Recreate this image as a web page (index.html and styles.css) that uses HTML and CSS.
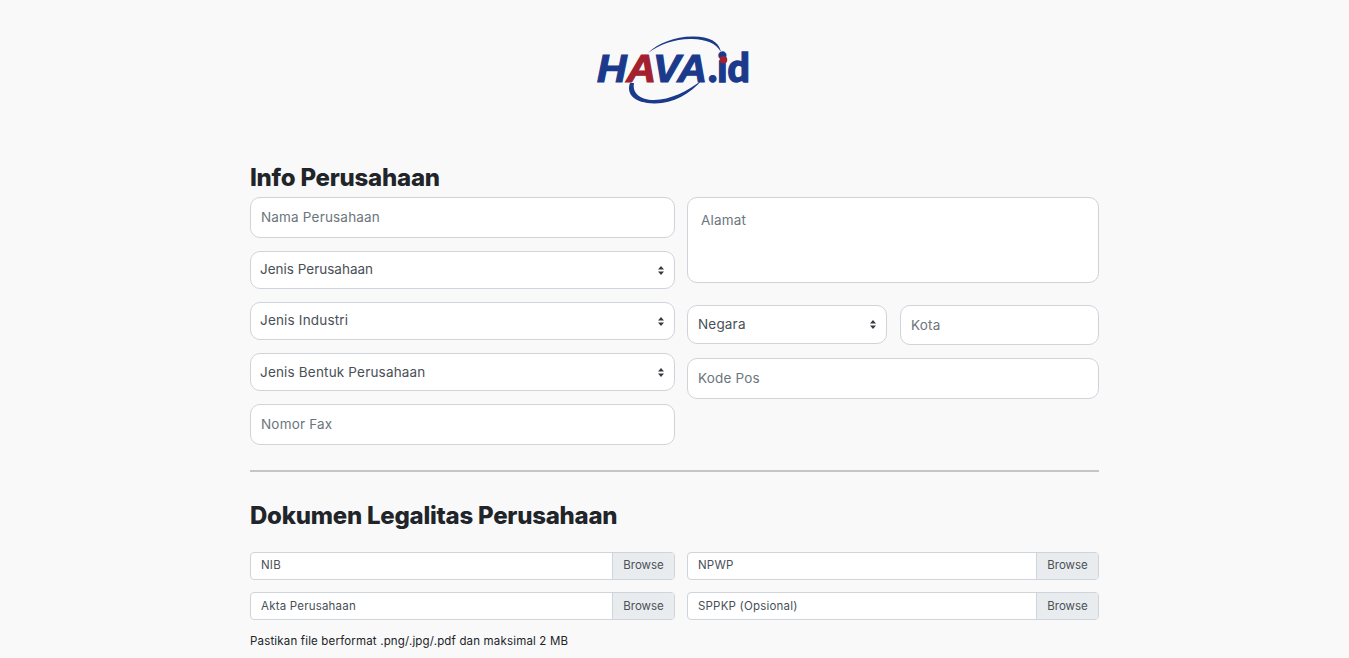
FILE: index.html
```html
<!DOCTYPE html>
<html lang="id">
<head>
<meta charset="utf-8">
<title>Info Perusahaan</title>
<link rel="stylesheet" href="styles.css">
</head>
<body>
<main class="page">
  <header class="logo-wrap">
    <svg class="logo" width="160" height="72" viewBox="0 0 160 72" role="img" aria-label="HAVA.id">
      <path class="arc" d="M52 19C62 9 80 2 98 2.500C113 3 123 7 125 18C120 9 110 5.500 96 5C80 4.500 64 10 52 19Z"/>
      <path class="arc" d="M34 49C30 60 38 69 58 69.500C76 70 94 60 106 46C92 57 74 66 58 66C44 66 36 59 38 49Z"/>
      <text class="word" x="1" y="48" textLength="110" lengthAdjust="spacingAndGlyphs"><tspan class="blue">H</tspan><tspan class="red">A</tspan><tspan class="blue">VA</tspan></text>
      <text class="tail blue" x="112" y="47.500">.id</text>
      <circle class="dot" cx="127.500" cy="25.700" r="3.800"/>
    </svg>
  </header>

  <h2 class="title first">Info Perusahaan</h2>
  <section class="cols">
    <div class="stack">
      <input class="field" placeholder="Nama Perusahaan">
      <div class="pick tight"><span>Jenis Perusahaan</span><svg class="caret" width="6" height="9" viewBox="0 0 6 9"><path d="M3 0 6 3.500H0ZM3 9 0 5.500H6Z"/></svg></div>
      <div class="pick"><span>Jenis Industri</span><svg class="caret" width="6" height="9" viewBox="0 0 6 9"><path d="M3 0 6 3.500H0ZM3 9 0 5.500H6Z"/></svg></div>
      <div class="pick low"><span>Jenis Bentuk Perusahaan</span><svg class="caret" width="6" height="9" viewBox="0 0 6 9"><path d="M3 0 6 3.500H0ZM3 9 0 5.500H6Z"/></svg></div>
      <input class="field" placeholder="Nomor Fax">
    </div>
    <div class="stack">
      <textarea class="area" placeholder="Alamat"></textarea>
      <div class="pair">
        <div class="pick tall"><span>Negara</span><svg class="caret" width="6" height="9" viewBox="0 0 6 9"><path d="M3 0 6 3.500H0ZM3 9 0 5.500H6Z"/></svg></div>
        <input class="field short" placeholder="Kota">
      </div>
      <input class="field" placeholder="Kode Pos">
    </div>
  </section>

  <hr class="rule">

  <h2 class="title second">Dokumen Legalitas Perusahaan</h2>
  <section class="files">
    <div class="file"><span class="name">NIB</span><span class="browse">Browse</span></div>
    <div class="file"><span class="name">NPWP</span><span class="browse">Browse</span></div>
    <div class="file low"><span class="name">Akta Perusahaan</span><span class="browse">Browse</span></div>
    <div class="file low"><span class="name">SPPKP (Opsional)</span><span class="browse">Browse</span></div>
  </section>
  <p class="hint">Pastikan file berformat .png/.jpg/.pdf dan maksimal 2 MB</p>
</main>
</body>
</html>
```
FILE: styles.css
```css
* { box-sizing: border-box; }
html, body { margin: 0; height: 658px; overflow: hidden; }
body {
  background: #f9f9fa;
  font-family: Inter, "Open Sans", sans-serif;
  color: #212529;
}
.page { width: 849px; margin: 0 auto; }
.logo-wrap { display: flex; justify-content: center; height: 133px; padding-top: 34px; }
.logo { display: block; margin-left: 3px; }
.word { font: italic 700 38px "Liberation Sans", sans-serif; stroke-width: 1.2px; }
.tail { font: 900 39px Lato, sans-serif; }
.blue { fill: #1b3a8c; stroke: #1b3a8c; }
.red { fill: #a3202e; stroke: #a3202e; }
.tail.blue { stroke-width: 1.4px; }
.arc { fill: #1b3a8c; }
.dot { fill: #a3202e; }

.title { margin: 0; font: 800 24px/29px Inter, sans-serif; color: #212529; letter-spacing: -0.24px; }
.first { margin-top: 30px; margin-bottom: 5px; }
.second { margin-top: 29px; margin-bottom: 22px; }

.cols { display: grid; grid-template-columns: 425px 412px; column-gap: 12px; height: 248px; align-items: start; }
.stack { display: flex; flex-direction: column; gap: 13px; }
.field, .area, .pick {
  display: block;
  width: 100%;
  background: #fff;
  border: 1px solid #ced4da;
  border-radius: 10px;
  font-family: Inter, sans-serif;
  font-size: 13.500px;
  letter-spacing: 0.18px;
  color: #495057;
  outline: none;
}
.field { height: 41px; padding: 0 10px 2px; }
.field::placeholder, .area::placeholder { color: #6c757d; opacity: 1; }
.area { height: 86px; padding: 14px 13px; resize: none; margin-bottom: 9px; }
.pick { height: 38px; padding: 0 10px 2px 9px; display: flex; align-items: center; justify-content: space-between; }
.pick.tight { letter-spacing: 0; }
.pick.low { padding-bottom: 0; }
.pick.low .caret { margin-top: 0; }
.caret { fill: #343a40; flex: none; margin-top: 2px; }
.pair { display: grid; grid-template-columns: 200px 199px; column-gap: 13px; align-items: start; }
.pick.tall { height: 39px; padding-left: 10px; }
.field.short { height: 40px; padding-bottom: 0; }

.rule { margin: 25px 0 0; width: 849px; height: 2px; border: 0; background: #c4c6c8; }

.files { display: grid; grid-template-columns: 425px 412px; column-gap: 12px; row-gap: 12px; }
.file { display: flex; height: 28px; background: #fff; border: 1px solid #ced4da; border-radius: 4px; overflow: hidden; font-size: 11.500px; line-height: 24px; color: #495057; }
.file.low { line-height: 26px; }
.name { flex: 1; padding: 0 10px; letter-spacing: 0.2px; }
.browse { width: 62px; background: #e9ecef; border-left: 1px solid #ced4da; text-align: center; }
.hint { margin: 14px 0 0; font-size: 11.500px; line-height: 15px; letter-spacing: 0.17px; color: #212529; }
```
